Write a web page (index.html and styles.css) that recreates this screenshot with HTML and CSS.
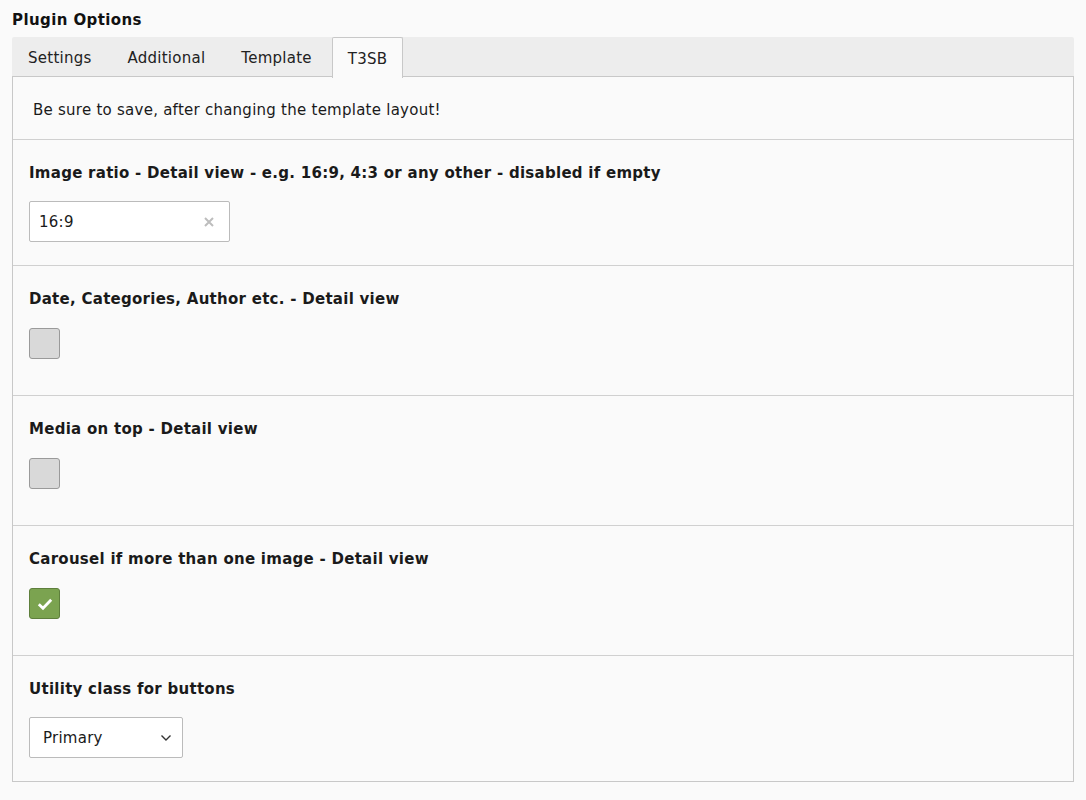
FILE: index.html
```html
<!DOCTYPE html>
<html>
<head>
<meta charset="utf-8">
<link rel="stylesheet" href="styles.css">
</head>
<body>
<div class="page">
  <h1 class="title">Plugin Options</h1>
  <div class="tabs">
    <div class="tab">Settings</div>
    <div class="tab">Additional</div>
    <div class="tab">Template</div>
    <div class="tab active">T3SB</div>
  </div>
  <div class="panel">
    <div class="row notice">Be sure to save, after changing the template layout!</div>
    <div class="row">
      <div class="label">Image ratio - Detail view - e.g. 16:9, 4:3 or any other - disabled if empty</div>
      <div class="input">
        <span>16:9</span>
        <svg class="clear" width="12" height="12" viewBox="0 0 12 12"><path d="M2 2 L10 10 M10 2 L2 10" stroke="#bdbdbd" stroke-width="2" fill="none"/></svg>
      </div>
    </div>
    <div class="row cbrow">
      <div class="label">Date, Categories, Author etc. - Detail view</div>
      <div class="checkbox"></div>
    </div>
    <div class="row cbrow">
      <div class="label">Media on top - Detail view</div>
      <div class="checkbox"></div>
    </div>
    <div class="row cbrow">
      <div class="label">Carousel if more than one image - Detail view</div>
      <div class="checkbox checked">
        <svg width="16" height="14" viewBox="0 0 16 14"><path d="M1.8 7.2 L6 11.2 L14.2 2.8" stroke="#fff" stroke-width="2.8" fill="none"/></svg>
      </div>
    </div>
    <div class="row last">
      <div class="label">Utility class for buttons</div>
      <div class="select">
        <span>Primary</span>
        <svg width="12" height="8" viewBox="0 0 12 8"><path d="M1.5 1.5 L6 6 L10.5 1.5" stroke="#333" stroke-width="1.4" fill="none"/></svg>
      </div>
    </div>
  </div>
</div>
</body>
</html>
```
FILE: styles.css
```css
* { box-sizing: border-box; }
html, body { margin: 0; padding: 0; background: #fafafa; }
body { font-family: "DejaVu Sans", Verdana, sans-serif; font-size: 15px; letter-spacing: 0.25px; color: #1a1a1a; }
.page { padding: 10px 12px 0 12px; }
.title { margin: 0; font-size: 15px; font-weight: bold; line-height: 20px; letter-spacing: 0.4px; color: #111; height: 27px; }
.tabs { display: flex; background: #ededed; height: 40px; border-bottom: 1px solid #c8c8c8; border-radius: 2px 2px 0 0; }
.tab { padding: 2px 16px 0; line-height: 38px; color: #222; margin-right: 4px; }
.tab.active { background: #fafafa; border: 1px solid #c8c8c8; border-bottom: none; height: 41px; margin-bottom: -1px; padding: 2px 15px 0; border-radius: 2px 2px 0 0; }
.panel { border: 1px solid #c8c8c8; border-top: none; background: #fafafa; }
.row { padding: 23px 16px 23px; border-bottom: 1px solid #d0d0d0; }
.row.last { border-bottom: none; }
.notice { padding: 23px 20px 19px; line-height: 20px; }
.label { font-weight: bold; line-height: 20px; letter-spacing: 0.27px; margin-bottom: 18px; }
.input { width: 201px; height: 41px; border: 1px solid #bbb; border-radius: 2px; background: #fff; display: flex; align-items: center; justify-content: space-between; padding: 0 14px 0 9px; }
.cbrow { padding-bottom: 36px; }
.cbrow .label { margin-bottom: 19px; }
.checkbox { width: 31px; height: 31px; border: 1px solid #9a9a9a; border-radius: 3px; background: #d9d9d9; display: flex; align-items: center; justify-content: center; }
.checkbox.checked { background: #7ba350; border-color: #5e7f3c; }
.select { width: 154px; height: 41px; border: 1px solid #bbb; border-radius: 2px; background: #fff; display: flex; align-items: center; justify-content: space-between; padding: 0 10px 0 13px; }
```
